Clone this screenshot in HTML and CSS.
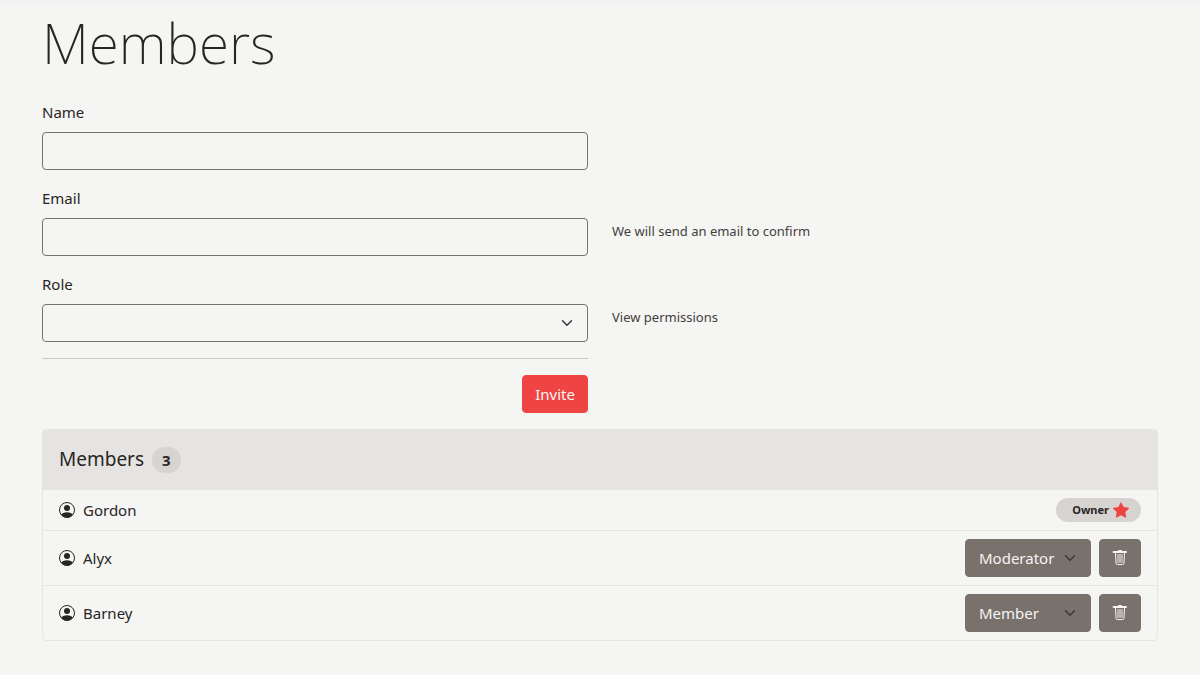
FILE: index.html
```html
<!DOCTYPE html>
<html lang="en">

<head>
  <meta charset="UTF-8">
  <meta name="viewport" content="width=device-width, initial-scale=1.0">
  <title>Members</title>
  <link rel="stylesheet" href="styles.css">
</head>

<body>
  <svg class="sprite" aria-hidden="true">
    <symbol id="icon-person" viewBox="0 0 16 16">
      <circle cx="8" cy="8" r="7.5" fill="none" stroke="currentColor" />
      <circle cx="8" cy="6" r="3" />
      <path d="M2 12.800C3 11 5.300 10.200 8 10.200s5 .8 6 2.600A7.700 7.700 0 0 1 8 15.800a7.700 7.700 0 0 1-6-3z" />
    </symbol>
    <symbol id="icon-trash" viewBox="0 0 16 16">
      <path fill="none" stroke="currentColor" stroke-linecap="round" stroke-linejoin="round" d="M1.500 1.500h13v1h-13zM6.500 1V.5h3V1M3.500 2.500l.5 10.800a1.300 1.300 0 0 0 1.300 1.200h5.400a1.300 1.300 0 0 0 1.300-1.200l.5-10.800M6 4.500v8M8 4.500v8M10 4.500v8" />
    </symbol>
    <symbol id="icon-star" viewBox="0 0 16 16">
      <path d="M3.612 15.443c-.386.198-.824-.149-.746-.592l.83-4.730L.173 6.765c-.329-.314-.158-.888.283-.950l4.898-.696L7.538.792c.197-.390.730-.390.927 0l2.184 4.327 4.898.696c.441.062.612.636.282.950l-3.522 3.356.830 4.730c.078.443-.360.790-.746.592L8 13.187l-4.389 2.256z" />
    </symbol>
  </svg>

  <main>
    <h1>Members</h1>

    <form>
      <div class="row">
        <div class="field">
          <label for="name">Name</label>
          <input type="text" id="name">
        </div>
      </div>
      <div class="row">
        <div class="field">
          <label for="email">Email</label>
          <input type="email" id="email">
        </div>
        <p class="help">We will send an email to confirm</p>
      </div>
      <div class="row">
        <div class="field">
          <label for="role">Role</label>
          <select id="role">
            <option value=""></option>
            <option>Moderator</option>
            <option>Member</option>
          </select>
        </div>
        <p class="help"><a href="#">View permissions</a></p>
      </div>
      <div class="row">
        <div class="actions">
          <button type="submit" class="btn-invite">Invite</button>
        </div>
      </div>
    </form>

    <section class="card">
      <h2>Members <span class="count">3</span></h2>
      <ul>
        <li>
          <svg class="icon"><use href="#icon-person" /></svg>
          <span class="member">Gordon</span>
          <span class="owner">Owner <svg class="icon star"><use href="#icon-star" /></svg></span>
        </li>
        <li>
          <svg class="icon"><use href="#icon-person" /></svg>
          <span class="member">Alyx</span>
          <select class="role" aria-label="Role of Alyx">
            <option selected>Moderator</option>
            <option>Member</option>
          </select>
          <button type="button" class="btn-delete" aria-label="Remove Alyx"><svg class="icon"><use href="#icon-trash" /></svg></button>
        </li>
        <li>
          <svg class="icon"><use href="#icon-person" /></svg>
          <span class="member">Barney</span>
          <select class="role" aria-label="Role of Barney">
            <option>Moderator</option>
            <option selected>Member</option>
          </select>
          <button type="button" class="btn-delete" aria-label="Remove Barney"><svg class="icon"><use href="#icon-trash" /></svg></button>
        </li>
      </ul>
    </section>
  </main>
</body>

</html>
```
FILE: styles.css
```css
* {
  box-sizing: border-box;
}

body {
  margin: 0;
  border-top: 6px solid #f3f3f3;
  background-color: #f5f5f4;
  color: #292524;
  font-family: "Noto Sans", sans-serif;
  font-size: 15px;
  line-height: 24px;
}

main {
  padding: 4px 42px 34px;
}

h1 {
  margin: 0 0 24px;
  font-size: 55px;
  font-weight: 200;
  line-height: 66px;
}

.sprite {
  display: none;
}

.row {
  display: grid;
  grid-template-columns: 1fr 1fr;
  gap: 24px;
  margin-bottom: 16px;
}

label {
  display: block;
  margin-bottom: 8px;
}

input,
select,
button {
  height: 38px;
  border: 1px solid #78716c;
  border-radius: 4px;
  font: inherit;
}

input,
select {
  display: block;
  width: 100%;
  padding: 6px 13px;
  background-color: transparent;
  color: inherit;
}

select {
  appearance: none;
  background-image: url("data:image/svg+xml,%3Csvg xmlns='http://www.w3.org/2000/svg' viewBox='0 0 16 16'%3E%3Cpath fill='none' stroke='%23343a40' stroke-linecap='round' stroke-linejoin='round' stroke-width='2' d='m2 5 6 6 6-6'/%3E%3C/svg%3E");
  background-repeat: no-repeat;
  background-position: right 14px center;
  background-size: 12px 12px;
}

.help {
  margin: 0;
  padding-top: 35px;
  font-size: 13px;
  line-height: 21px;
  color: #44403c;
}

.help a {
  color: inherit;
  text-decoration: none;
}

.actions {
  padding-top: 16px;
  border-top: 1px solid #c9c8c7;
  text-align: right;
}

button {
  display: inline-flex;
  align-items: center;
  padding: 6px 12px;
  color: #f5f5f4;
}

.btn-invite {
  background-color: #ef4444;
  border-color: #ef4444;
  vertical-align: top;
}

.card {
  border: 1px solid #e7e5e4;
  border-radius: 4px;
}

.card h2 {
  display: flex;
  align-items: center;
  gap: 8px;
  margin: 0;
  padding: 16px;
  background-color: #e5e4e2;
  font-size: 19px;
  font-weight: 400;
  line-height: 27px;
}

.count {
  padding: 0 10px;
  border-radius: 13px;
  background-color: #d6d3d1;
  font-size: 15px;
  font-weight: 700;
  line-height: 26px;
}

.card ul {
  margin: 0;
  padding: 0;
  list-style: none;
}

.card li {
  display: flex;
  align-items: center;
  gap: 8px;
  padding: 8px 16px;
  border-top: 1px solid #e7e5e4;
}

.icon {
  display: block;
  width: 16px;
  height: 16px;
  fill: currentColor;
}

.member {
  flex: 1;
}

.owner {
  display: flex;
  align-items: center;
  gap: 4px;
  padding: 0 12px 0 16px;
  border-radius: 12px;
  background-color: #d6d3d1;
  font-size: 11px;
  font-weight: 700;
}

.star {
  color: #ef4444;
}

.role {
  width: 126px;
  background-color: #78716c;
  color: #f5f5f4;
}

.btn-delete {
  background-color: #78716c;
}
```
